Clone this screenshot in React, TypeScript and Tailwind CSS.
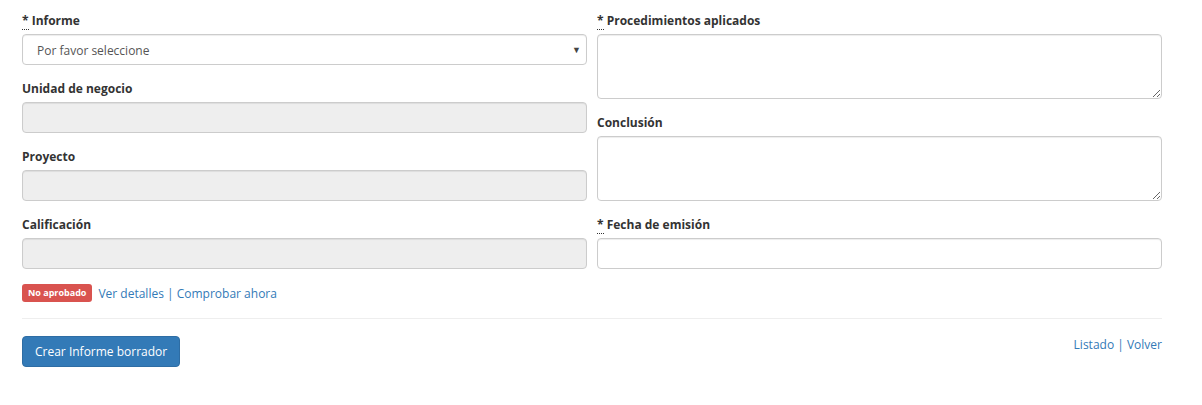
function Req() {
  return (
    <abbr title="Obligatorio" className="cursor-help border-b border-dotted border-[#333] no-underline">
      *
    </abbr>
  );
}

function Field({ label, required, children }: { label: string; required?: boolean; children: React.ReactNode }) {
  return (
    <div className="mb-[15px]">
      <label className="mb-[5px] block text-[12px] font-bold leading-[17px] text-[#333]">
        {required && (
          <>
            <Req />{" "}
          </>
        )}
        {label}
      </label>
      {children}
    </div>
  );
}

const disabledInput =
  "block h-[31px] w-full cursor-not-allowed rounded-[4px] border border-[#ccc] bg-[#eee] shadow-[inset_0_1px_1px_rgba(0,0,0,0.075)]";

const textArea =
  "block h-[65px] w-full rounded-[4px] border border-[#ccc] bg-white shadow-[inset_0_1px_1px_rgba(0,0,0,0.075)]";

export default function App() {
  return (
    <div className="min-h-[405px] bg-white px-[22px] pt-[12px] font-['Open_Sans',sans-serif] text-[12px] leading-[17px] text-[#333]">
      <div className="w-[1140px]">
        <div className="grid grid-cols-[565px_565px] gap-x-[10px]">
          <div>
            <Field label="Informe" required>
              <div className="relative">
                <select className="block h-[31px] w-full appearance-none rounded-[4px] border border-[#ccc] bg-white px-[14px] pt-[1px] text-[12px] text-[#555] shadow-[inset_0_1px_1px_rgba(0,0,0,0.075)]">
                  <option>Por favor seleccione</option>
                </select>
                <span className="pointer-events-none absolute right-[6px] top-[7px] text-[9px] text-[#444]">▼</span>
              </div>
            </Field>
            <Field label="Unidad de negocio">
              <input disabled className={disabledInput} />
            </Field>
            <Field label="Proyecto">
              <input disabled className={disabledInput} />
            </Field>
            <Field label="Calificación">
              <input disabled className={disabledInput} />
            </Field>
          </div>
          <div>
            <Field label="Procedimientos aplicados" required>
              <textarea className={textArea} />
            </Field>
            <Field label="Conclusión">
              <textarea className={textArea} />
            </Field>
            <Field label="Fecha de emisión" required>
              <input className="block h-[31px] w-full rounded-[4px] border border-[#ccc] bg-white shadow-[inset_0_1px_1px_rgba(0,0,0,0.075)]" />
            </Field>
          </div>
        </div>

        <div className="flex h-[18px] items-center gap-[6px]">
          <span className="rounded-[3px] bg-[#d9534f] px-[6px] text-[9px] font-bold leading-[18px] text-white">
            No aprobado
          </span>
          <span>
            <a href="#" className="text-[#337ab7]">Ver detalles</a>
            <span className="text-[#337ab7]"> | </span>
            <a href="#" className="text-[#337ab7]">Comprobar ahora</a>
          </span>
        </div>

        <hr className="mb-[17px] mt-[16px] border-t border-[#eee]" />

        <div className="flex items-start justify-between">
          <button className="h-[31px] rounded-[4px] border border-[#2e6da4] bg-[#337ab7] px-[12px] text-[12px] text-white">
            Crear Informe borrador
          </button>
          <div className="text-[#337ab7]">
            <a href="#">Listado</a> | <a href="#">Volver</a>
          </div>
        </div>
      </div>
    </div>
  );
}
